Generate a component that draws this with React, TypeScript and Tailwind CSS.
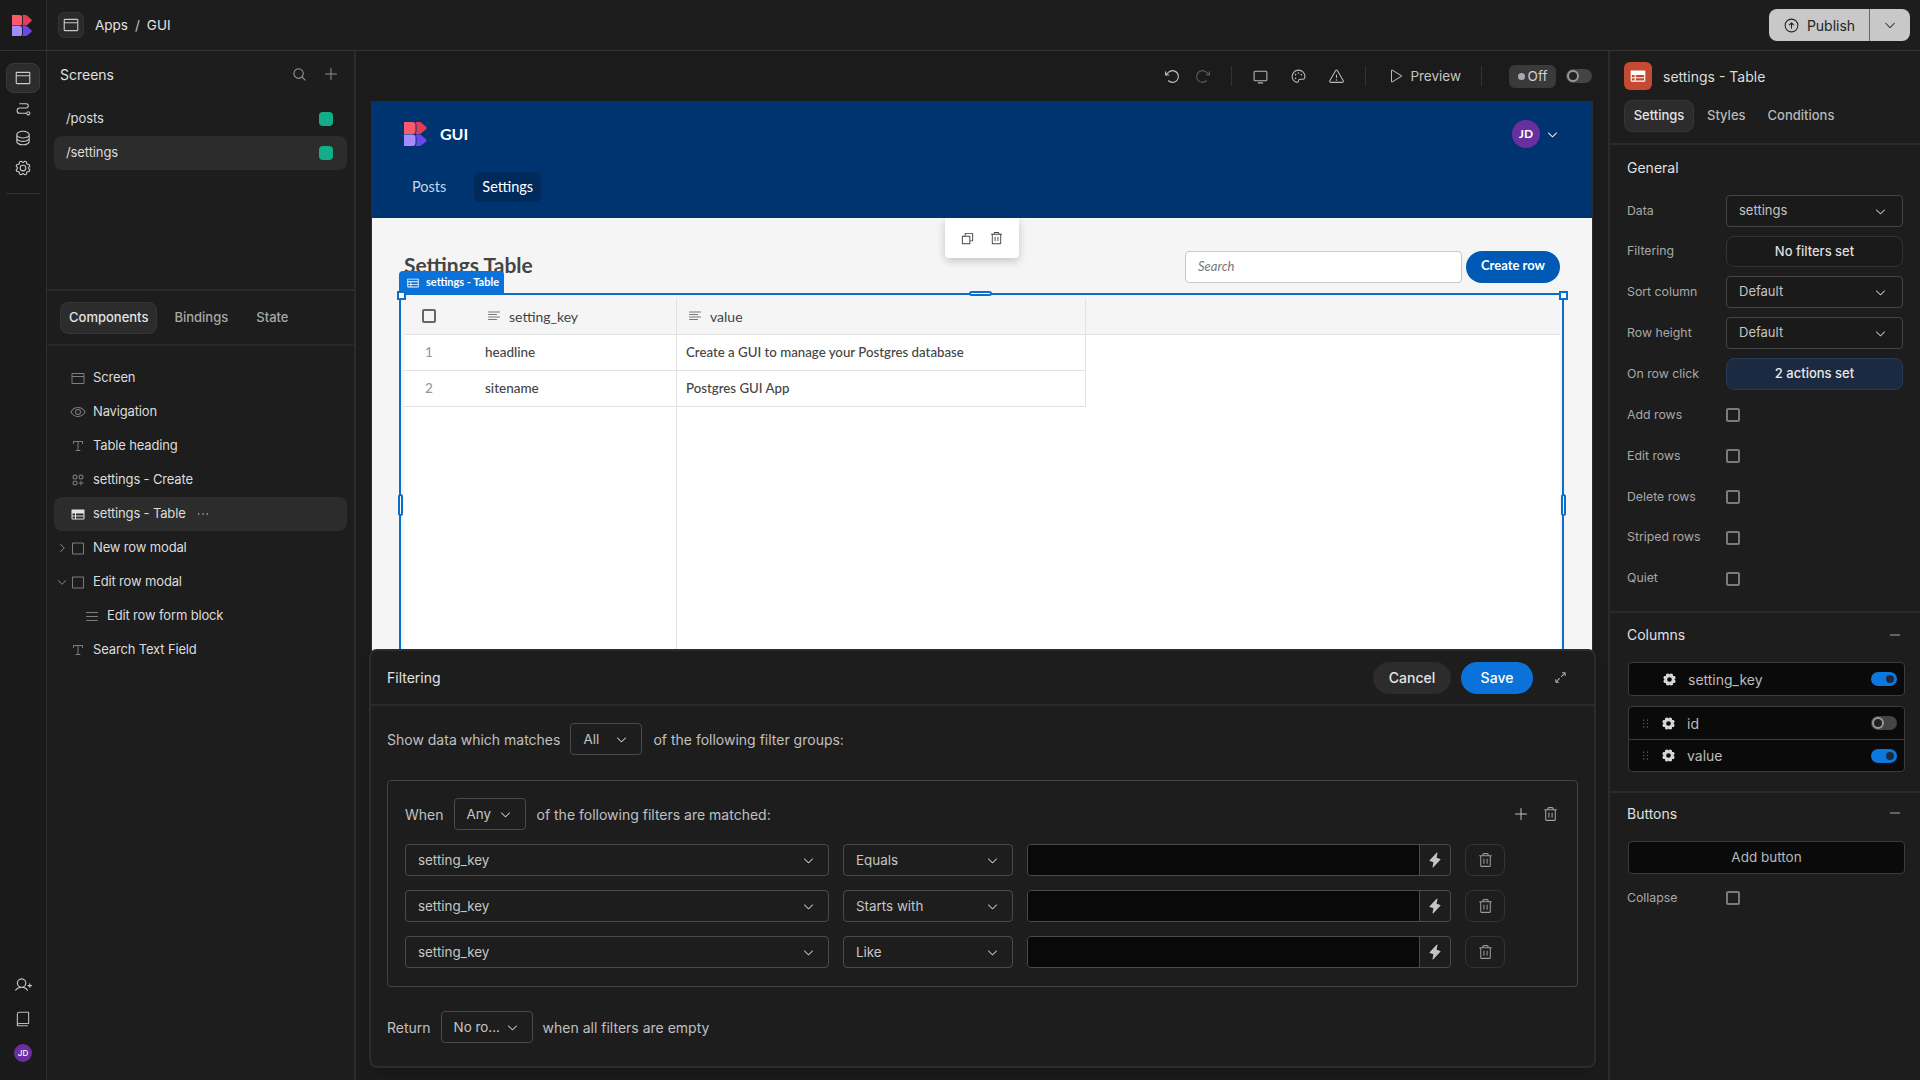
import React from "react";
import {
  PiArrowClockwise, PiArrowCounterClockwise, PiArrowCircleUp, PiArrowsOutSimple, PiBook, PiBrowser, PiCaretDown, PiCaretRight,
  PiCirclesThreePlus, PiCopy, PiDatabase, PiDotsSixVertical, PiDotsThree, PiEye, PiGear, PiGearFill, PiLightningFill,
  PiList, PiMagnifyingGlass, PiMinus, PiMonitor, PiPalette, PiPath, PiPlay, PiPlus, PiSquare, PiTable, PiTableFill,
  PiTextAlignLeft, PiTextT, PiTrash, PiUserPlus, PiWarning,
} from "react-icons/pi";

const Logo = ({ className }: { className: string }) => (
  <svg viewBox="0 0 24 24" className={className}>
    <path d="M0 0h8.5a3 3 0 0 1 3 3v6a3 3 0 0 1-3 3H0z" fill="#f9596b" />
    <path d="M11.5 0h4a3 3 0 0 1 2.2 1l4.5 4a1.4 1.4 0 0 1 0 2l-4.5 4a3 3 0 0 1-2.2 1h-4a6 6 0 0 0 1-3V3a6 6 0 0 0-1-3z" fill="#e23d52" />
    <path d="M0 12.5h8.5a3 3 0 0 1 3 3v5.500a3 3 0 0 1-3 3H0z" fill="#a48bfb" />
    <path d="M11.500 12.500h4a3 3 0 0 1 2.200 1l4.500 4a1.400 1.400 0 0 1 0 2l-4.500 3.500a3 3 0 0 1-2.200 1h-4a6 6 0 0 0 1-3v-5.500a6 6 0 0 0-1-3z" fill="#6a47e6" />
  </svg>
);

const RailBtn = ({ icon, active }: { icon: React.ReactNode; active?: boolean }) => (
  <div className={`flex h-[30px] w-[34px] items-center justify-center rounded-lg text-[#c8c8c8] ${active ? "border border-[#3a3a3a] bg-[#2c2c2c]" : ""}`}>{icon}</div>
);

const Tree = ({ icon, label, caret, active, indent, more }: { icon: React.ReactNode; label: string; caret?: "r" | "d"; active?: boolean; indent?: boolean; more?: boolean }) => (
  <div className={`flex h-[34px] items-center rounded-lg ${active ? "bg-[#2c2c2c]" : ""}`}>
    <span className="flex w-[16px] shrink-0 items-center justify-center text-[#8a8a8a]">
      {caret === "r" && <PiCaretRight size={12} />}
      {caret === "d" && <PiCaretDown size={12} />}
    </span>
    <span className={`flex w-[16px] shrink-0 items-center justify-center ${indent ? "ml-[14px]" : ""} ${active ? "text-[#e4e4e4]" : "text-[#7e7e7e]"}`}>{icon}</span>
    <span className="ml-[7px] text-[13px] tracking-[-0.15px] text-[#dcdcdc]">{label}</span>
    {more && <PiDotsThree size={16} className="ml-[9px] text-[#c4c4c4]" />}
  </div>
);

const DarkSelect = ({ label, className }: { label: string; className: string }) => (
  <div className={`flex h-[32px] items-center justify-between rounded-[4px] border border-[#4a4a4a] pl-[12px] pr-[13px] text-[13.4px] text-[#c6c6c6] ${className}`}>
    <span>{label}</span>
    <PiCaretDown size={13} className="text-[#c6c6c6]" />
  </div>
);

const FilterRow = ({ op }: { op: string }) => (
  <div className="flex items-center">
    <DarkSelect label="setting_key" className="w-[424px]" />
    <DarkSelect label={op} className="ml-[14px] w-[170px]" />
    <div className="ml-[14px] flex h-[32px] w-[424px] overflow-hidden rounded-[4px] border border-[#4a4a4a]">
      <div className="flex-1 bg-[#090909]" />
      <div className="flex w-[31px] items-center justify-center border-l border-[#4a4a4a] text-[#c4c4c4]"><PiLightningFill size={16} /></div>
    </div>
    <div className="ml-[14px] flex h-[32px] w-[40px] items-center justify-center rounded-lg border border-[#333] text-[#9a9a9a]"><PiTrash size={17} /></div>
  </div>
);

const PropRow = ({ label, children }: { label: string; children: React.ReactNode }) => (
  <div className="flex items-center">
    <span className="w-[99px] shrink-0 text-[12.3px] text-[#a8a8a8]">{label}</span>
    {children}
  </div>
);

const PropSelect = ({ v }: { v: string }) => (
  <div className="flex h-[32px] w-[177px] items-center justify-between rounded-[4px] border border-[#444] bg-[#1a1a1a] pl-[12px] pr-[15px] text-[13px] text-[#c4c4c4]">
    <span>{v}</span><PiCaretDown size={13} />
  </div>
);

const Check = ({ label }: { label: string }) => (
  <PropRow label={label}>
    <div className="h-[14px] w-[14px] rounded-[2px] border-2 border-[#7a7a7a]" />
  </PropRow>
);

const Toggle = ({ on }: { on: boolean }) => (
  <div className={`flex h-[14px] w-[26px] items-center rounded-full ${on ? "justify-end bg-[#0b78e0]" : "justify-start bg-[#444]"}`}>
    <div className={`h-[12px] w-[12px] rounded-full ${on ? "mr-[1px] border-2 border-[#0b78e0] bg-[#1a2a3a]" : "ml-[1px] border-2 border-[#999] bg-[#222]"}`} />
  </div>
);

const ColRow = ({ name, on, drag, border }: { name: string; on: boolean; drag?: boolean; border?: boolean }) => (
  <div className={`flex h-[32px] items-center pl-[8px] pr-[7px] ${border ? "border-t border-[#3c3c3c]" : ""}`}>
    <span className="flex w-[17px] justify-center text-[#7a7a7a]">{drag && <PiDotsSixVertical size={13} />}</span>
    <PiGearFill size={15} className={`${drag ? "ml-[7px]" : "ml-[8px]"} text-[#d6d6d6]`} />
    <span className="ml-[11px] flex-1 text-[14px] text-[#bcbcbc]">{name}</span>
    <Toggle on={on} />
  </div>
);

const Handle = ({ className }: { className: string }) => (
  <div className={`absolute border-2 border-[#0b6fc9] bg-white ${className}`} />
);

export default function App() {
  const sans = { fontFamily: "Inter, sans-serif" };
  return (
    <div className="flex h-screen w-[1920px] flex-col overflow-hidden bg-[#1d1d1d] font-['Inter',sans-serif] text-[#e0e0e0]" style={sans}>
      {/* top bar */}
      <header className="flex h-[51px] shrink-0 items-center border-b border-[#333]">
        <div className="flex h-full w-[47px] shrink-0 items-center justify-center border-r border-[#2c2c2c] bg-[#1a1a1a] pr-[2px]">
          <Logo className="h-[21px] w-[21px]" />
        </div>
        <div className="ml-[11px] flex h-[26px] w-[26px] items-center justify-center rounded-md border border-[#333] bg-[#2a2a2a] text-[#c8c8c8]"><PiBrowser size={18} /></div>
        <span className="ml-[11px] text-[13.5px] text-[#e4e4e4]">Apps</span>
        <span className="ml-[7px] text-[13.5px] text-[#c4c4c4]">/</span>
        <span className="ml-[7px] text-[13.5px] text-[#e4e4e4]">GUI</span>
        <div className="ml-auto mr-[10px] flex h-[32px] items-center overflow-hidden rounded-lg bg-[#c8c8c8] text-[#252525]">
          <div className="flex h-full w-[101px] items-center justify-center gap-[7px] border-r border-[#666] text-[14px]">
            <PiArrowCircleUp size={17} /><span>Publish</span>
          </div>
          <div className="flex h-full w-[40px] items-center justify-center"><PiCaretDown size={14} /></div>
        </div>
      </header>

      <div className="flex min-h-0 flex-1">
        {/* rail */}
        <nav className="flex w-[47px] shrink-0 flex-col items-center border-r border-[#2c2c2c] bg-[#1a1a1a] pt-[12px] pb-[18px]">
          <RailBtn active icon={<PiBrowser size={18} />} />
          <RailBtn icon={<PiPath size={17} />} />
          <RailBtn icon={<PiDatabase size={18} />} />
          <RailBtn icon={<PiGear size={18} />} />
          <div className="mt-[10px] w-[34px] border-t border-[#333]" />
          <div className="mt-auto flex flex-col items-center gap-[16px]">
            <PiUserPlus size={18} className="text-[#c8c8c8]" />
            <PiBook size={18} className="text-[#b8b8b8]" />
            <div className="flex h-[18px] w-[18px] items-center justify-center rounded-full bg-[#6a2f9e] text-[8px] font-medium text-white">JD</div>
          </div>
        </nav>

        {/* left panel */}
        <aside className="flex w-[309px] shrink-0 flex-col border-r-2 border-[#2b2b2b]">
          <div className="h-[240px] shrink-0 border-b-2 border-[#2b2b2b] px-[7px]">
            <div className="mb-[5px] flex h-[46px] items-center pl-[6px] pr-[8px]">
              <span className="flex-1 text-[14px] text-[#e0e0e0]">Screens</span>
              <PiMagnifyingGlass size={15} className="mr-[16px] text-[#a4a4a4]" />
              <PiPlus size={16} className="text-[#8f8f8f]" />
            </div>
            <div className="flex flex-col">
              {["/posts", "/settings"].map((s, i) => (
                <div key={s} className={`flex h-[34px] items-center justify-between pl-[12px] pr-[14px] text-[13px] tracking-[-0.1px] text-[#dcdcdc] ${i ? "rounded-lg bg-[#2c2c2c]" : ""}`}>
                  <span>{s}</span><span className="h-[14px] w-[14px] rounded-[4px] bg-[#13ae87]" />
                </div>
              ))}
            </div>
          </div>
          <div className="flex h-[55px] shrink-0 items-center gap-[9px] border-b-2 border-[#262626] pl-[13px]">
            <div className="flex h-[32px] items-center rounded-lg border border-[#353535] bg-[#2c2c2c] px-[8px] text-[13px] font-medium text-[#e4e4e4]">Components</div>
            <div className="px-[8px] text-[13px] font-medium text-[#a8a8a8]">Bindings</div>
            <div className="ml-[3px] px-[8px] text-[13px] font-medium text-[#a8a8a8]">State</div>
          </div>
          <div className="flex flex-col px-[7px] pt-[15px]">
            <Tree icon={<PiBrowser size={17} />} label="Screen" />
            <Tree icon={<PiEye size={18} />} label="Navigation" />
            <Tree icon={<PiTextT size={16} />} label="Table heading" />
            <Tree icon={<PiCirclesThreePlus size={16} />} label="settings - Create" />
            <Tree active more icon={<PiTableFill size={17} />} label="settings - Table" />
            <Tree caret="r" icon={<PiSquare size={17} />} label="New row modal" />
            <Tree caret="d" icon={<PiSquare size={17} />} label="Edit row modal" />
            <Tree indent icon={<PiList size={17} />} label="Edit row form block" />
            <Tree icon={<PiTextT size={16} />} label="Search Text Field" />
          </div>
        </aside>

        {/* canvas */}
        <main className="relative flex min-w-0 flex-1 flex-col overflow-hidden bg-[#1b1b1b]">
          <div className="flex h-[50px] shrink-0 items-center justify-end pr-[16px] text-[#b8b8b8]">
            <PiArrowCounterClockwise size={17} className="text-[#c4c4c4]" />
            <PiArrowClockwise size={17} className="ml-[13px] text-[#5c5c5c]" />
            <div className="ml-[20px] h-[20px] border-l border-[#333]" />
            <PiMonitor size={17} className="ml-[20px]" />
            <PiPalette size={17} className="ml-[21px]" />
            <PiWarning size={17} className="ml-[21px]" />
            <div className="ml-[20px] h-[20px] border-l border-[#333]" />
            <PiPlay size={16} className="ml-[21px]" />
            <span className="ml-[7px] text-[13.5px] text-[#c4c4c4]">Preview</span>
            <div className="ml-[20px] h-[20px] border-l border-[#333]" />
            <div className="ml-[27px] flex h-[23px] w-[47px] items-center justify-center gap-[3px] rounded-md bg-[#3a3a3a] text-[13.5px] text-[#d0d0d0]">
              <span className="h-[7px] w-[7px] rounded-full bg-[#aaa]" />Off
            </div>
            <div className="ml-[10px] flex h-[14px] w-[26px] items-center rounded-full bg-[#444]">
              <div className="ml-[1px] h-[12px] w-[12px] rounded-full border-2 border-[#999] bg-[#222]" />
            </div>
          </div>

          {/* preview */}
          <div className="mx-[15px] mb-[100px] min-h-0 flex-1 overflow-hidden border-l border-r border-[#2d2d2d] bg-[#f5f5f5] font-['Lato',sans-serif]">
            <div className="h-[117px] bg-[#003470] pl-[32px] pr-[33px] pt-[21px]">
              <div className="flex h-[24px] items-center">
                <Logo className="h-[24px] w-[24px]" />
                <span className="ml-[12px] text-[16px] font-bold text-white">GUI</span>
                <div className="ml-auto flex h-[28px] w-[28px] items-center justify-center rounded-full bg-[#6a2f9e] text-[12px] font-bold text-white">JD</div>
                <PiCaretDown size={13} className="ml-[6px] text-white" />
              </div>
              <div className="mt-[26px] flex items-center gap-[20px]">
                <span className="px-[8px] text-[14.5px] text-[#c5d6e8]">Posts</span>
                <span className="rounded-md bg-[#002a5c] px-[8px] py-[4px] text-[14.5px] text-white">Settings</span>
              </div>
            </div>

            <div className="relative px-[32px]">
              <div className="absolute left-[573px] top-0 z-10 flex h-[40px] w-[74px] items-center justify-center gap-[14px] rounded-b-[4px] bg-white text-[#444] shadow-[0_3px_8px_rgba(0,0,0,0.2)]">
                <PiCopy size={15} /><PiTrash size={15} />
              </div>
              <div className="flex h-[80px] items-end pb-[15px]">
                <span className="-translate-y-[5px] text-[21px] font-bold leading-[26px] text-[#444]">Settings Table</span>
                <div className="ml-auto flex h-[32px] w-[277px] items-center rounded-[4px] border border-[#c8c8c8] bg-white pl-[12px] text-[13px] italic text-[#777]">Search</div>
                <div className="ml-[4px] flex h-[32px] w-[94px] items-center justify-center rounded-full bg-[#005ab5] pb-[2px] text-[13px] font-bold text-white">Create row</div>
              </div>
              <div className="relative h-[360px] bg-white">
                <div className="flex h-[37px] bg-[#f5f5f5] text-[14px] text-[#444]">
                  <div className="flex w-[273px] items-center border-b border-r border-[#e2e2e2]">
                    <span className="ml-[18px] h-[14px] w-[14px] rounded-[2px] border-2 border-[#666]" />
                    <PiTextAlignLeft size={16} className="ml-[50px] text-[#777]" />
                    <span className="ml-[7px]">setting_key</span>
                  </div>
                  <div className="flex w-[409px] items-center border-b border-r border-[#e2e2e2] pl-[10px]">
                    <PiTextAlignLeft size={16} className="text-[#777]" />
                    <span className="ml-[7px]">value</span>
                  </div>
                  <div className="flex-1 border-b border-[#e2e2e2]" />
                </div>
                {[["1", "headline", "Create a GUI to manage your Postgres database"], ["2", "sitename", "Postgres GUI App"]].map((r) => (
                  <div key={r[0]} className="flex h-[36px] text-[13.5px] font-medium text-[#444]">
                    <div className="flex w-[273px] items-center border-b border-r border-[#e2e2e2]">
                      <span className="w-[50px] text-center text-[#999]">{r[0]}</span>
                      <span className="ml-[31px]">{r[1]}</span>
                    </div>
                    <div className="flex w-[409px] items-center border-b border-r border-[#e2e2e2] pl-[9px] text-[13.25px]">{r[2]}</div>
                  </div>
                ))}
                <div className="absolute bottom-0 left-[272px] top-[109px] border-l border-[#e2e2e2]" />
              </div>
              {/* selection frame */}
              <div className="absolute left-[27px] right-[28px] top-[75px] h-[700px] border-2 border-[#0b6fc9]" />
              <div className="absolute left-[27px] top-[53px] flex h-[23px] w-[105px] items-center gap-[6px] rounded-t-[4px] bg-[#0b72da] pl-[7px] text-[11px] font-bold text-white">
                <PiTable size={14} /><span>settings - Table</span>
              </div>
              <Handle className="left-[25px] top-[73px] h-[9px] w-[9px]" />
              <Handle className="right-[24px] top-[73px] h-[9px] w-[9px]" />
              <Handle className="left-[597px] top-[73px] h-[5px] w-[23px] rounded-sm" />
              <Handle className="left-[26px] top-[276px] h-[22px] w-[5px] rounded-sm" />
              <Handle className="right-[26px] top-[276px] h-[22px] w-[5px] rounded-sm" />
            </div>
          </div>

          {/* filtering drawer */}
          <section className="absolute bottom-[12px] left-[13px] right-[12px] top-[598px] flex flex-col rounded-lg border-2 border-[#2c2c2c] bg-[#1d1d1d] shadow-lg">
            <div className="flex h-[55px] shrink-0 items-center border-b-2 border-[#2a2a2a] pl-[16px] pr-[26px]">
              <span className="flex-1 text-[14px] text-[#e4e4e4]">Filtering</span>
              <div className="flex h-[32px] w-[78px] items-center justify-center rounded-full bg-[#2c2c2c] text-[14px] font-medium text-[#e4e4e4]">Cancel</div>
              <div className="ml-[10px] flex h-[32px] w-[72px] items-center justify-center rounded-full bg-[#0b72da] text-[14px] font-medium text-white">Save</div>
              <PiArrowsOutSimple size={15} className="ml-[20px] text-[#b0b0b0]" />
            </div>
            <div className="flex flex-col px-[16px] pt-[17px] text-[14px] text-[#c0c0c0]">
              <div className="flex items-center">
                <span>Show data which matches</span>
                <DarkSelect label="All" className="ml-[10px] w-[72px]" />
                <span className="ml-[11px]">of the following filter groups:</span>
              </div>
              <div className="mt-[25px] h-[207px] w-[1191px] rounded-[4px] border border-[#444] px-[17px] pt-[17px]">
                <div className="flex items-center">
                  <span>When</span>
                  <DarkSelect label="Any" className="ml-[10px] w-[72px]" />
                  <span className="ml-[11px]">of the following filters are matched:</span>
                  <PiPlus size={16} className="ml-auto mr-[13px] text-[#c0c0c0]" />
                  <PiTrash size={17} className="mr-[1px] text-[#a0a0a0]" />
                </div>
                <div className="mt-[14px] flex flex-col gap-[14px]">
                  <FilterRow op="Equals" />
                  <FilterRow op="Starts with" />
                  <FilterRow op="Like" />
                </div>
              </div>
              <div className="mt-[24px] flex items-center">
                <span>Return</span>
                <DarkSelect label="No ro..." className="ml-[10px] w-[92px]" />
                <span className="ml-[10px]">when all filters are empty</span>
              </div>
            </div>
          </section>
        </main>

        {/* right panel */}
        <aside className="flex w-[312px] shrink-0 flex-col border-l-2 border-[#2b2b2b]">
          <div className="h-[94px] shrink-0 border-b-2 border-[#2a2a2a] pl-[14px]">
            <div className="flex h-[48px] items-center pt-[2px]">
              <div className="flex h-[28px] w-[28px] items-center justify-center rounded-md bg-[#c44b32] text-white"><PiTableFill size={18} /></div>
              <span className="ml-[11px] text-[14px] text-[#dcdcdc]">settings - Table</span>
            </div>
            <div className="mt-[1px] flex items-center text-[13px] font-medium text-[#b8b8b8]">
              <div className="flex h-[32px] w-[70px] items-center justify-center rounded-lg border border-[#353535] bg-[#2c2c2c] text-[#e4e4e4]">Settings</div>
              <span className="ml-[13px]">Styles</span>
              <span className="ml-[22px]">Conditions</span>
            </div>
          </div>

          <div className="h-[468px] shrink-0 border-b-2 border-[#2a2a2a] pl-[17px]">
            <div className="flex h-[50px] items-center pb-[6px] text-[14px] text-[#e0e0e0]">General</div>
            <div className="flex flex-col gap-[9px]">
              <PropRow label="Data"><PropSelect v="settings" /></PropRow>
              <PropRow label="Filtering">
                <div className="flex h-[31px] w-[177px] items-center justify-center rounded-lg border border-[#333] bg-[#1a1a1a] text-[13px] font-medium text-[#dedede]">No filters set</div>
              </PropRow>
              <PropRow label="Sort column"><PropSelect v="Default" /></PropRow>
              <PropRow label="Row height"><PropSelect v="Default" /></PropRow>
              <PropRow label="On row click">
                <div className="flex h-[32px] w-[177px] items-center justify-center rounded-lg border border-[#263a55] bg-[#1b2a40] text-[13px] font-medium text-[#e8e8e8]">2 actions set</div>
              </PropRow>
            </div>
            <div className="mt-[16px] flex flex-col gap-[22.4px]">
              <Check label="Add rows" />
              <Check label="Edit rows" />
              <Check label="Delete rows" />
              <Check label="Striped rows" />
              <Check label="Quiet" />
            </div>
          </div>

          <div className="h-[180px] shrink-0 border-b-2 border-[#2a2a2a] pl-[18px] pr-[15px]">
            <div className="flex h-[49px] items-center justify-between pb-[6px] text-[14px] text-[#e0e0e0]">
              <span className="-ml-[1px]">Columns</span><PiMinus size={14} className="mr-[3px] text-[#a8a8a8]" />
            </div>
            <div className="rounded-[4px] border border-[#3c3c3c] bg-[#0a0a0a]"><ColRow name="setting_key" on /></div>
            <div className="mt-[10px] rounded-[4px] border border-[#3c3c3c] bg-[#0a0a0a]">
              <ColRow drag name="id" on={false} />
              <ColRow drag border name="value" on />
            </div>
          </div>

          <div className="pl-[18px] pr-[15px]">
            <div className="flex h-[48px] items-center justify-between pb-[8px] text-[14px] text-[#e0e0e0]">
              <span className="-ml-[1px]">Buttons</span><PiMinus size={14} className="mr-[3px] text-[#a8a8a8]" />
            </div>
            <div className="flex h-[33px] items-center justify-center rounded-[4px] border border-[#3c3c3c] bg-[#0a0a0a] text-[13.5px] text-[#b8b8b8]">Add button</div>
            <div className="-ml-[1px] mt-[15px]"><Check label="Collapse" /></div>
          </div>
        </aside>
      </div>
    </div>
  );
}
